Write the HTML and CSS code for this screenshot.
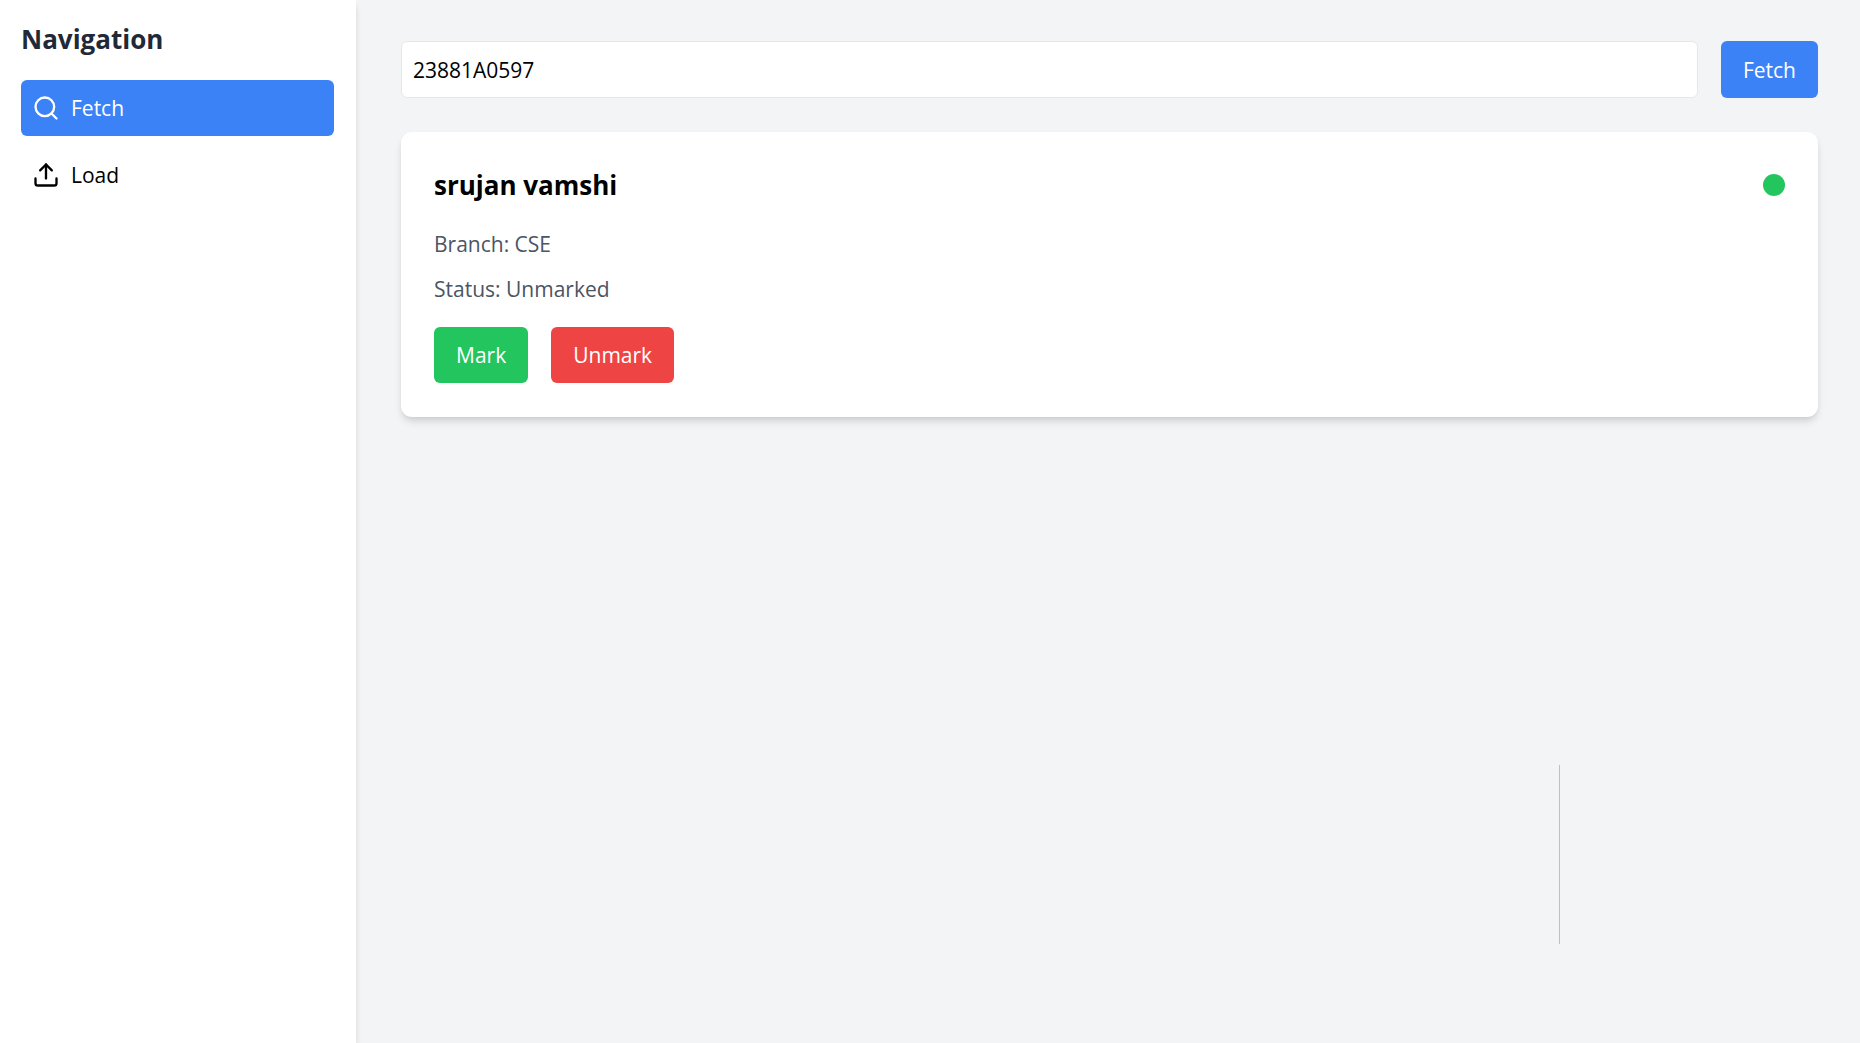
FILE: index.html
```html
<!DOCTYPE html>
<html lang="en">
<head>
<meta charset="utf-8">
<meta name="viewport" content="width=device-width, initial-scale=1">
<title>Fetch</title>
<link rel="stylesheet" href="styles.css">
</head>
<body>
<div class="layout">
  <aside class="sidebar">
    <h2 class="sidebar-title">Navigation</h2>
    <nav class="nav">
      <button type="button" class="nav-item nav-item-active">
        <svg class="icon" viewBox="0 0 24 24" aria-hidden="true"><circle cx="11" cy="11" r="8"/><path d="m21 21-4.3-4.3"/></svg>
        <span>Fetch</span>
      </button>
      <button type="button" class="nav-item">
        <svg class="icon" viewBox="0 0 24 24" aria-hidden="true"><path d="M21 15v4a2 2 0 0 1-2 2H5a2 2 0 0 1-2-2v-4"/><path d="m17 8-5-5-5 5"/><path d="M12 3v12"/></svg>
        <span>Load</span>
      </button>
    </nav>
  </aside>
  <main class="main">
    <form class="search">
      <input class="search-input" type="text" aria-label="Roll number" value="23881A0597">
      <button type="button" class="button button-blue">Fetch</button>
    </form>
    <section class="card">
      <header class="card-header">
        <h3 class="card-title">srujan vamshi</h3>
        <span class="status-dot"></span>
      </header>
      <div class="details">
        <p>Branch: CSE</p>
        <p>Status: Unmarked</p>
      </div>
      <div class="actions">
        <button type="button" class="button button-green">Mark</button>
        <button type="button" class="button button-red">Unmark</button>
      </div>
    </section>
  </main>
</div>
<div class="overlay-line"></div>
</body>
</html>
```
FILE: styles.css
```css
* {
  box-sizing: border-box;
  margin: 0;
}

body {
  background: #f3f4f6;
  color: #000;
  font-family: "Segoe UI", "Open Sans", "Noto Sans", sans-serif;
  font-size: 21px;
  line-height: 34px;
}

button,
input {
  font: inherit;
  color: inherit;
}

button {
  border: 0;
  cursor: pointer;
}

.layout {
  display: flex;
  min-height: 100vh;
}

.sidebar {
  flex: none;
  width: 356px;
  padding: 21px 22px 21px 21px;
  background: #fff;
  box-shadow: 0 6px 8px -1px rgba(0, 0, 0, 0.1), 0 3px 6px -2px rgba(0, 0, 0, 0.1);
}

.sidebar-title {
  margin-bottom: 23px;
  color: #1f2937;
  font-size: 26px;
  font-weight: 700;
  line-height: 36px;
}

.nav {
  display: flex;
  flex-direction: column;
  gap: 11px;
}

.nav-item {
  display: flex;
  align-items: center;
  gap: 11px;
  padding: 11px;
  border-radius: 6px;
  background: transparent;
}

.nav-item-active {
  background: #3b82f6;
  color: #fff;
}

.icon {
  width: 28px;
  height: 28px;
  fill: none;
  stroke: currentColor;
  stroke-width: 2;
  stroke-linecap: round;
  stroke-linejoin: round;
}

.main {
  flex: 1;
  min-width: 0;
  padding: 41px 42px 41px 45px;
}

.search {
  display: flex;
  gap: 23px;
  min-height: 57px;
  margin-bottom: 34px;
}

.search-input {
  flex: 1;
  min-width: 0;
  padding: 10px 11px;
  border: 1px solid #e5e7eb;
  border-radius: 6px;
  background: #fff;
}

.button {
  padding: 11px 22px;
  border-radius: 6px;
  color: #fff;
}

.button-blue {
  background: #3b82f6;
}

.button-green {
  background: #22c55e;
}

.button-red {
  background: #ef4444;
}

.card {
  padding: 33px 33px 34px;
  border-radius: 11px;
  background: #fff;
  box-shadow: 0 6px 8px -1px rgba(0, 0, 0, 0.1), 0 3px 6px -2px rgba(0, 0, 0, 0.1);
}

.card-header {
  display: flex;
  align-items: center;
  justify-content: space-between;
  margin-bottom: 22px;
}

.card-title {
  font-size: 26px;
  font-weight: 700;
  line-height: 40px;
}

.status-dot {
  width: 22px;
  height: 22px;
  border-radius: 50%;
  background: #22c55e;
}

.details {
  display: flex;
  flex-direction: column;
  gap: 11px;
  margin-bottom: 21px;
  color: #4b5563;
}

.actions {
  display: flex;
  gap: 23px;
}

/* Thin vertical rule floating over the page */
.overlay-line {
  position: fixed;
  right: 300px;
  bottom: 99px;
  width: 1px;
  height: 179px;
  background: #bfc0c2;
}
```
